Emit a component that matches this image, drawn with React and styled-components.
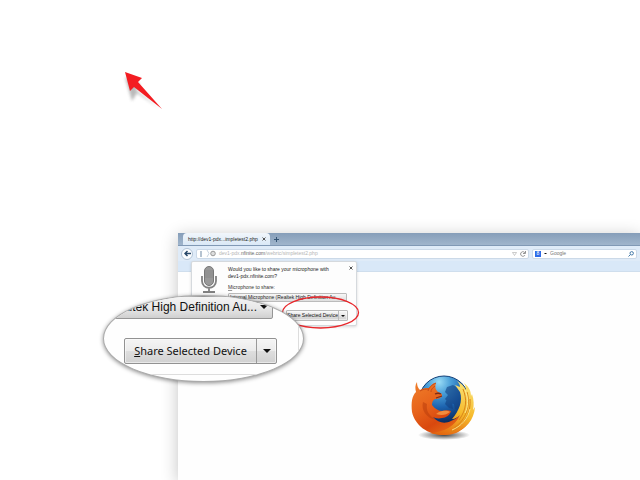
import React from "react";
import styled, { createGlobalStyle } from "styled-components";

const Global = createGlobalStyle`
  * { box-sizing: border-box; }
  body { margin: 0; background: #fff; font-family: "Liberation Sans", Arial, sans-serif; }
  button, input, select { font: inherit; color: inherit; margin: 0; }
`;

const Page = styled.main`
  position: relative;
  min-height: 100vh;
  padding: 233px 0 0 178px;
  overflow: hidden;
`;

const BrowserWindow = styled.section`
  position: relative;
  min-height: calc(100vh - 233px);
  background: #fefefe;
  box-shadow: 0 3px 16px rgba(0, 0, 0, 0.24);
  font-size: 5px;
  line-height: 7px;
  color: #333;
`;

const TabBar = styled.div`
  display: flex;
  align-items: flex-end;
  height: 13px;
  padding-left: 5px;
  background: linear-gradient(#869eb9, #a0b5cc);
  border-bottom: 1px solid #8199b5;
`;

const Tab = styled.div`
  display: flex;
  align-items: center;
  justify-content: space-between;
  width: 87px;
  height: 12px;
  padding: 0 4px 0 5px;
  background: linear-gradient(#f1f6fb, #dae8f6);
  border-radius: 4px 4px 0 0;
  color: #222;
`;

const IconButton = styled.button`
  display: flex;
  align-items: center;
  justify-content: center;
  flex: none;
  width: ${(p) => p.$size || 6}px;
  height: ${(p) => p.$size || 6}px;
  padding: 0;
  border: ${(p) => (p.$ring ? "1px solid #b1c3d6" : "0")};
  border-radius: 50%;
  background: ${(p) => (p.$ring ? "#fbfdff" : "none")};
  svg { display: block; flex: none; }
`;

const NavBar = styled.div`
  display: flex;
  align-items: center;
  gap: 3px;
  height: 15px;
  padding: 0 3px;
  background: #dfebf8;
`;

const Field = styled.div`
  display: flex;
  align-items: center;
  flex: ${(p) => (p.$width ? "none" : "1")};
  width: ${(p) => (p.$width ? p.$width + "px" : "auto")};
  min-width: 0;
  gap: 3px;
  height: 10px;
  padding: 0 2px;
  background: #fff;
  border: 1px solid #cbd9e8;
  border-radius: 2px;
`;

const Address = styled.div`
  flex: 1;
  color: #b5b5b5;
  b { font-weight: normal; color: #666; }
`;

const SearchInput = styled.input`
  flex: 1;
  min-width: 0;
  height: 7px;
  padding: 0;
  border: 0;
  background: none;
  color: #777;
  &::placeholder { color: #777; }
`;

const SearchEngine = styled.span`
  display: flex;
  align-items: center;
  justify-content: center;
  width: 6px;
  height: 6px;
  background: #2d6be8;
  color: #fff;
`;

const BookmarkBar = styled.div`
  height: 11px;
  background: #d9e8f8;
  border-bottom: 1px solid #cfdeed;
`;

const StartPage = styled.div`
  padding: 102px 0 0 231px;
  svg { display: block; }
`;

const Popup = styled.form`
  position: absolute;
  top: 28px;
  left: 13px;
  display: flex;
  gap: 10px;
  width: 166px;
  height: 65px;
  padding: 4px 3px 3px 8px;
  background: #fdfdfd;
  border: 1px solid #d5d9dd;
  border-radius: 2px;
  box-shadow: 0 1px 3px rgba(0, 0, 0, 0.15);
`;

const PopupIcon = styled.svg`
  flex: none;
  width: 18px;
  height: 28px;
`;

const PopupBody = styled.div`
  flex: 1;
  min-width: 0;
`;

const PopupHead = styled.div`
  display: flex;
  justify-content: space-between;
  white-space: nowrap;
`;

const Question = styled.p`
  margin: 0;
  color: #222;
`;

const DeviceLabel = styled.label`
  display: block;
  margin: 4px 0 2px;
  u { text-decoration-color: #999; }
`;

const DeviceSelect = styled.select`
  display: block;
  width: 119px;
  height: 9px;
  padding: 0 1px;
  appearance: none;
  background: linear-gradient(#f7f7f7, #dedede);
  border: 1px solid #bbb;
  border-radius: 1px;
  color: #222;
`;

const SplitButton = styled.div`
  display: flex;
  width: ${(p) => (p.$large ? 153 : 62)}px;
  height: ${(p) => (p.$large ? 26 : 11)}px;
  margin: ${(p) => (p.$large ? "19px 0 0 20px" : "8px 0 0 58px")};
  border: 1px solid ${(p) => (p.$large ? "#929292" : "#bbb")};
  border-radius: ${(p) => (p.$large ? 2 : 1)}px;
  background: linear-gradient(#f3f3f3 0 10%, #ebebeb 49%, #dedede 51%, #d1d1d1);
  box-shadow: inset 0 0 0 1px rgba(255, 255, 255, 0.5);
`;

const ShareButton = styled.button`
  flex: 1;
  padding: 0;
  border: 0;
  background: none;
  color: #111;
  white-space: nowrap;
`;

const MenuButton = styled.button`
  display: flex;
  align-items: center;
  justify-content: center;
  flex: none;
  width: ${(p) => (p.$large ? 20 : 9)}px;
  padding: 0;
  border: 0;
  border-left: 1px solid ${(p) => (p.$large ? "#999" : "#bbb")};
  background: none;
`;

const Highlight = styled.svg`
  position: absolute;
  top: 296px;
  left: 281px;
  width: 79px;
  height: 33px;
  pointer-events: none;
`;

const Magnifier = styled.section`
  position: absolute;
  top: 295px;
  left: 103px;
  width: 201px;
  height: 87px;
  overflow: hidden;
  background: #fefefe;
  border: 1px solid #aaa;
  border-radius: 50%;
  box-shadow: 0 1px 4px rgba(0, 0, 0, 0.45);
  color: #111;
  font-family: "Noto Sans", "Open Sans", sans-serif;
  font-size: 11px;
  line-height: 16px;
`;

const MagnifiedPanel = styled.div`
  width: 195px;
  height: 79px;
  border-right: 1px solid #ddd;
  border-bottom: 1px solid #ddd;
`;

const MagnifiedSelect = styled.button`
  display: flex;
  align-items: center;
  justify-content: flex-end;
  gap: 3px;
  width: 169px;
  height: 23px;
  padding: 0 4px 2px 0;
  overflow: hidden;
  border: 1px solid #969696;
  border-radius: 2px;
  background: linear-gradient(#f3f3f3, #e9e9e9 50%, #d0d0d0);
  font-family: "Liberation Sans", Arial, sans-serif;
  font-size: 12px;
  white-space: nowrap;
`;

const Pointer = styled.svg`
  position: absolute;
  top: 68px;
  left: 120px;
  width: 48px;
  height: 46px;
`;

const Caret = ({ size = 8 }) => (
  <svg width={size} height={size / 2} viewBox="0 0 8 4" aria-hidden="true">
    <path d="M0 0h8L4 4z" fill="#111" />
  </svg>
);

const Cross = () => (
  <svg width="4" height="4" viewBox="0 0 4 4" aria-hidden="true">
    <path d="M.5.5l3 3m0-3l-3 3" stroke="#555" strokeWidth="1" />
  </svg>
);

function Share({ large }) {
  return (
    <SplitButton $large={large}>
      <ShareButton type="button"><u>S</u>hare Selected Device</ShareButton>
      <MenuButton $large={large} type="button" aria-label="More sharing options">
        <Caret size={large ? 8 : 4} />
      </MenuButton>
    </SplitButton>
  );
}

function MicrophoneIcon() {
  return (
    <PopupIcon viewBox="0 0 18 28" aria-hidden="true">
      <rect x="4.5" y=".5" width="9" height="19" rx="4.5" fill="#999" stroke="#777" />
      <path d="M5 5h8M5 7h8M5 9h8M5 11h8" stroke="#858585" strokeWidth=".7" />
      <path d="M2 10v5c0 9 14 9 14 0v-5M9 22v4M3 26h12" fill="none" stroke="#818181" strokeWidth="1.8" />
    </PopupIcon>
  );
}

function FirefoxLogo() {
  return (
    <svg width="68" height="67" viewBox="0 0 68 67" role="img" aria-label="Firefox">
      <defs>
        <radialGradient id="globe" cx=".4" cy=".12" r=".85">
          <stop offset="0" stopColor="#9adcf6" />
          <stop offset=".28" stopColor="#4a9fd8" />
          <stop offset=".6" stopColor="#1c62ae" />
          <stop offset="1" stopColor="#082658" />
        </radialGradient>
        <linearGradient id="fur" x1="0" y1="0" x2=".7" y2="1">
          <stop offset="0" stopColor="#ef7f2a" />
          <stop offset=".4" stopColor="#e8641c" />
          <stop offset=".7" stopColor="#d9480e" />
          <stop offset="1" stopColor="#e8741a" />
        </linearGradient>
        <linearGradient id="tail" x1=".5" y1="0" x2=".2" y2="1">
          <stop offset="0" stopColor="#f9df70" />
          <stop offset=".5" stopColor="#f6b92a" />
          <stop offset="1" stopColor="#e2640f" />
        </linearGradient>
        <radialGradient id="ground">
          <stop offset="0" stopColor="#222" stopOpacity=".85" />
          <stop offset="1" stopColor="#222" stopOpacity="0" />
        </radialGradient>
      </defs>
      <ellipse cx="35" cy="61" rx="26" ry="5" fill="url(#ground)" />
      <circle cx="35" cy="27" r="25" fill="url(#globe)" stroke="#123f78" />
      <path d="M38 13l6-2 5 3 4 7 1 10-4 5-4-1-1-5-5-1-4-4 3-4-3-3zM38 25l5 4 1 6-4-1-4-4z" fill="#123f80" opacity=".6" />
      <path d="M8 8c0 4 1 6 3 8 3-2 6-2 9-2 2-3 4-5 7-5-1 3-1 6 1 8 2 2 5 2 5 4 0 3-4 4-7 4-2 1-3 3-3 6 3 4 7 6 10 6 3-1 7-1 9 0-1 4-5 7-9 7-4 1-7 0-9-1 5 6 12 7 18 4 6-2 10-7 13-12l8-1c1 7-2 14-7 19-5 5-12 8-20 8C18 61 6 51 3 38 2 28 3 22 7 18 6 14 6 11 8 8z" fill="url(#fur)" />
      <path d="M27 9c-5 2-7 5-8 8M26 12c-3 2-4 4-4 6M20 15c-3 0-6 0-9 2" fill="none" stroke="#c84b16" strokeWidth="1" />
      <path d="M26 20c2-1 4-1 6 0M27 24l6-2" fill="none" stroke="#7b2b18" strokeWidth="1.300" />
      <path d="M14 28c-2 8 3 16 13 18-8-5-10-10-9-16z" fill="#b93e0c" opacity=".55" />
      <path d="M30 38c4-1 7-2 11 0-4 3-8 4-14 2z" fill="#f18c3d" />
      <path d="M48 7c4 2 7 5 9 9 0-3-1-5-2-7 4 3 7 7 7 13l1-2c2 6 2 11 1 16l2-3c-1 13-9 22-21 26-9 3-17 2-24 0 15-1 25-7 30-18-2 2-5 4-8 4 7-8 11-18 8-27l-5-7 5 2c0-2-1-4-3-6z" fill="url(#tail)" />
      <path d="M54 15c4 10 4 20-4 31M58 18c4 13-1 28-13 36M61 25c1 12-4 25-19 33" fill="none" stroke="#d98518" strokeWidth="1" />
      <path d="M56 16c4 9 3 17 0 23M61 35c-2 9-8 17-18 21" fill="none" stroke="#fff09a" strokeWidth=".8" />
    </svg>
  );
}

export default function App() {
  return (
    <Page>
      <Global />
      <Pointer viewBox="0 0 48 46" aria-hidden="true">
        <defs>
          <filter id="soft" x="-30%" y="-30%" width="160%" height="160%"><feGaussianBlur stdDeviation="1.500" /></filter>
        </defs>
        <path d="M5 9l7 24 5-8 22 15-23-18 4-6z" fill="#666" opacity=".45" filter="url(#soft)" />
        <path d="M5 4l17 6-4 4 24 27-28-22-4 4z" fill="#f31d22" />
      </Pointer>

      <BrowserWindow>
        <TabBar>
          <Tab>
            <span>http://dev1-pdx...impletest2.php</span>
            <IconButton type="button" aria-label="Close tab" $size={4}><Cross /></IconButton>
          </Tab>
          <IconButton type="button" aria-label="New tab" $size={12}>
            <svg width="5" height="5" viewBox="0 0 5 5"><path d="M2.500 0v5M0 2.500h5" stroke="#345474" /></svg>
          </IconButton>
        </TabBar>
        <NavBar>
          <IconButton type="button" aria-label="Back" $size={12} $ring>
            <svg width="7" height="7" viewBox="0 0 7 7"><path d="M7 3.500H1M3.500 1L1 3.500 3.500 6" fill="none" stroke="#29496a" strokeWidth="1.500" /></svg>
          </IconButton>
          <Field>
            <svg width="4" height="6" viewBox="0 0 4 6"><path d="M2 0v4M1 5h2" stroke="#6d87a3" /></svg>
            <svg width="10" height="7" viewBox="0 0 10 7"><path d="M1 0l2 3.500L1 7" fill="none" stroke="#c8d3df" /><circle cx="7" cy="3.500" r="2.300" fill="#ddd" stroke="#999" /></svg>
            <Address>dev1-pdx.<b>nfinite.com</b>/webrtc/simpletest2.php</Address>
            <svg width="5" height="4" viewBox="0 0 5 4"><path d="M.5.5h4l-2 3z" fill="none" stroke="#aaa" strokeWidth=".6" /></svg>
            <IconButton type="button" aria-label="Reload">
              <svg width="6" height="6" viewBox="0 0 6 6"><path d="M5 2A2.300 2.300 0 1 0 5 4M5.500 0v2.500H3" fill="none" stroke="#888" strokeWidth=".9" /></svg>
            </IconButton>
          </Field>
          <Field $width={105}>
            <SearchEngine>8</SearchEngine>
            <Caret size={3} />
            <SearchInput aria-label="Search" placeholder="Google" />
            <IconButton type="button" aria-label="Start search">
              <svg width="6" height="6" viewBox="0 0 6 6"><circle cx="3.700" cy="2.300" r="1.700" fill="none" stroke="#4379a8" /><path d="M2.500 3.500L.5 5.500" stroke="#4379a8" /></svg>
            </IconButton>
          </Field>
        </NavBar>
        <BookmarkBar />
        <StartPage><FirefoxLogo /></StartPage>

        <Popup>
          <MicrophoneIcon />
          <PopupBody>
            <PopupHead>
              <Question>Would you like to share your microphone with<br />dev1-pdx.nfinite.com?</Question>
              <IconButton type="button" aria-label="Close" $size={4}><Cross /></IconButton>
            </PopupHead>
            <DeviceLabel htmlFor="device"><u>M</u>icrophone to share:</DeviceLabel>
            <DeviceSelect id="device">
              <option>Internal Microphone (Realtek High Definition Au...</option>
            </DeviceSelect>
            <Share />
          </PopupBody>
        </Popup>
      </BrowserWindow>

      <Highlight viewBox="0 0 79 33" aria-hidden="true">
        <ellipse cx="39.5" cy="16.5" rx="38" ry="15.500" fill="none" stroke="#e8272b" strokeWidth="1.300" />
      </Highlight>

      <Magnifier aria-label="Magnified sharing controls">
        <MagnifiedPanel>
          <MagnifiedSelect type="button">
            <span>Realtek High Definition Au...</span>
            <Caret />
          </MagnifiedSelect>
          <Share large />
        </MagnifiedPanel>
      </Magnifier>
    </Page>
  );
}
